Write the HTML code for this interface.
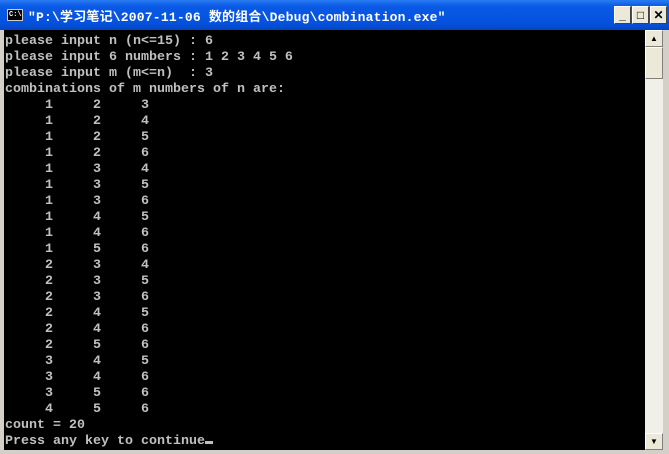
<!DOCTYPE html>
<html><head><meta charset="utf-8"><style>
*{margin:0;padding:0;box-sizing:border-box}
body{width:669px;height:454px;overflow:hidden;background:#d4d0c8;position:relative;font-family:"Liberation Sans",sans-serif}
#frame{position:absolute;left:0;top:0;width:669px;height:454px;background:#0a4fd8;border:1px solid #0831a0}
#title{position:absolute;left:0;top:0;width:669px;height:30px;background:linear-gradient(#2b7cf2,#0a5ae6 20%,#0451dd 80%,#0546c0)}
#tt{position:absolute;left:28px;top:6px;color:#fff;font:bold 13px "Liberation Mono","Noto Sans CJK SC",monospace;white-space:pre;letter-spacing:0.2px}
#ic{position:absolute;left:7px;top:9px;width:16px;height:12px;background:#000;border:1px solid #ccc;color:#fff;font:bold 7px "Liberation Mono",monospace;line-height:10px;padding-left:1px}
.b{position:absolute;top:6px;width:17px;height:18px;background:#ece9d8;border:1px solid;border-color:#fff #404040 #404040 #fff;font:bold 12px "Liberation Sans",sans-serif;text-align:center;line-height:16px;color:#000}
#con{position:absolute;left:4px;top:30px;width:641px;height:420px;background:#000;overflow:hidden}
pre{position:absolute;left:1px;top:4px;color:#c0c0c0;font:bold 13.33px/16px "Liberation Mono",monospace}
#sb{position:absolute;left:645px;top:30px;width:18px;height:420px;background:#f0efe8}
.sa{position:absolute;left:0;width:18px;height:17px;background:#ece9d8;border:1px solid;border-color:#fff #808080 #808080 #fff;font-size:8px;text-align:center;line-height:15px}
#thumb{position:absolute;left:0;top:17px;width:18px;height:32px;background:#ece9d8;border:1px solid;border-color:#fff #808080 #808080 #fff}
#rb{position:absolute;left:663px;top:30px;width:6px;height:424px;background:#d4d0c8}
#bb{position:absolute;left:0;top:450px;width:669px;height:4px;background:#d4d0c8}
#lb{position:absolute;left:0;top:30px;width:4px;height:424px;background:#d4d0c8}
.cur{display:inline-block;width:8px;height:3px;background:#c0c0c0}
</style></head><body>
<div id="frame"></div>
<div id="title"><div id="ic">C:\</div><div id="tt">"P:\学习笔记\2007-11-06 数的组合\Debug\combination.exe"</div>
<div class="b" style="left:614px">_</div><div class="b" style="left:632px">□</div><div class="b" style="left:650px">✕</div></div>
<div id="lb"></div><div id="rb"></div><div id="bb"></div>
<div id="con"><pre>please input n (n&lt;=15) : 6
please input 6 numbers : 1 2 3 4 5 6
please input m (m&lt;=n)  : 3
combinations of m numbers of n are:
     1     2     3
     1     2     4
     1     2     5
     1     2     6
     1     3     4
     1     3     5
     1     3     6
     1     4     5
     1     4     6
     1     5     6
     2     3     4
     2     3     5
     2     3     6
     2     4     5
     2     4     6
     2     5     6
     3     4     5
     3     4     6
     3     5     6
     4     5     6
count = 20
Press any key to continue<span class="cur"></span></pre></div>
<div id="sb"><div class="sa" style="top:0">▲</div><div id="thumb"></div><div class="sa" style="top:403px">▼</div></div>
</body></html>
